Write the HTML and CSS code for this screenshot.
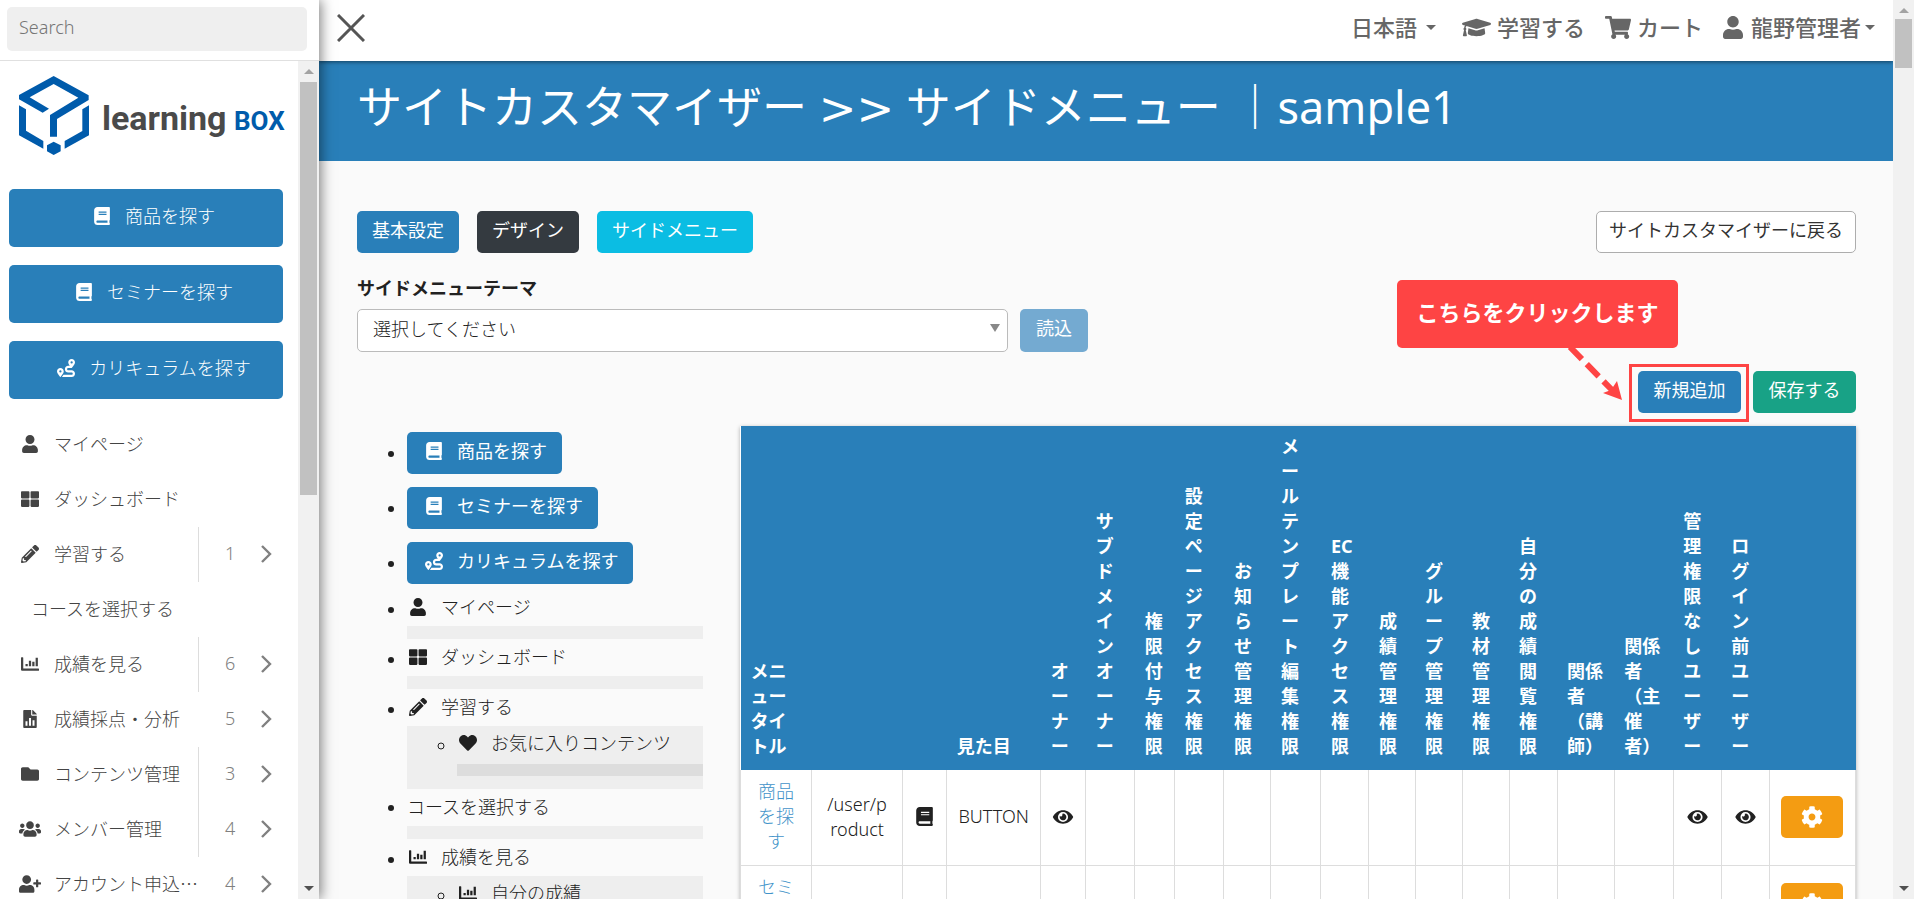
FILE: index.html
```html
<!DOCTYPE html>
<html lang="ja">
<head>
<meta charset="utf-8">
<title>サイトカスタマイザー</title>
<link rel="stylesheet" href="styles.css">
</head>
<body>
<svg class="sprite" aria-hidden="true">
  <symbol id="i-user" viewBox="0 0 448 512"><path d="M224 256c70.7 0 128-57.3 128-128S294.7 0 224 0 96 57.3 96 128s57.3 128 128 128zm89.6 32h-16.7c-22.2 10.2-46.9 16-72.9 16s-50.6-5.8-72.9-16h-16.7C60.2 288 0 348.2 0 422.4V464c0 26.5 21.5 48 48 48h352c26.5 0 48-21.5 48-48v-41.6c0-74.2-60.2-134.4-134.4-134.4z"/></symbol>
  <symbol id="i-th" viewBox="0 0 512 512"><path d="M296 32h192c13.255 0 24 10.745 24 24v160c0 13.255-10.745 24-24 24H296c-13.255 0-24-10.745-24-24V56c0-13.255 10.745-24 24-24zm-80 0H24C10.745 32 0 42.745 0 56v160c0 13.255 10.745 24 24 24h192c13.255 0 24-10.745 24-24V56c0-13.255-10.745-24-24-24zM0 296v160c0 13.255 10.745 24 24 24h192c13.255 0 24-10.745 24-24V296c0-13.255-10.745-24-24-24H24c-13.255 0-24 10.745-24 24zm296 184h192c13.255 0 24-10.745 24-24V296c0-13.255-10.745-24-24-24H296c-13.255 0-24 10.745-24 24v160c0 13.255 10.745 24 24 24z"/></symbol>
  <symbol id="i-pencil" viewBox="0 0 512 512"><path d="M497.9 142.1l-46.1 46.1c-4.7 4.7-12.3 4.7-17 0l-111-111c-4.7-4.7-4.7-12.3 0-17l46.1-46.1c18.7-18.7 49.1-18.7 67.9 0l60.1 60.1c18.8 18.7 18.8 49.1 0 67.9zM284.2 99.8L21.6 362.4.4 483.9c-2.9 16.4 11.4 30.6 27.8 27.8l121.5-21.3 262.6-262.6c4.7-4.7 4.7-12.3 0-17l-111-111c-4.8-4.7-12.4-4.7-17.1 0zM124.1 339.9c-5.5-5.5-5.5-14.3 0-19.8l154-154c5.5-5.5 14.3-5.5 19.8 0s5.5 14.3 0 19.8l-154 154c-5.5 5.5-14.3 5.5-19.8 0zM88 424h48v36.3l-64.5 11.3-31.1-31.1L51.7 376H88v48z"/></symbol>
  <symbol id="i-folder" viewBox="0 0 512 512"><path d="M464 128H272l-64-64H48C21.49 64 0 85.49 0 112v288c0 26.51 21.49 48 48 48h416c26.51 0 48-21.49 48-48V176c0-26.51-21.49-48-48-48z"/></symbol>
  <symbol id="i-book" viewBox="0 0 448 512"><path d="M448 360V24c0-13.3-10.7-24-24-24H96C43 0 0 43 0 96v320c0 53 43 96 96 96h328c13.3 0 24-10.7 24-24v-16c0-7.5-3.5-14.3-8.9-18.7-4.2-15.4-4.2-59.3 0-74.7 5.4-4.3 8.9-11.1 8.9-18.6zM128 134c0-3.3 2.7-6 6-6h212c3.3 0 6 2.7 6 6v20c0 3.3-2.7 6-6 6H134c-3.3 0-6-2.7-6-6v-20zm0 64c0-3.3 2.7-6 6-6h212c3.3 0 6 2.7 6 6v20c0 3.3-2.7 6-6 6H134c-3.3 0-6-2.7-6-6v-20zm253.4 250H96c-17.7 0-32-14.3-32-32 0-17.6 14.4-32 32-32h285.4c-1.9 17.1-1.9 46.9 0 64z"/></symbol>
  <symbol id="i-heart" viewBox="0 0 512 512"><path d="M462.3 62.6C407.5 15.9 326 24.3 275.7 76.2L256 96.5l-19.7-20.3C186.1 24.3 104.5 15.9 49.7 62.6c-62.8 53.6-66.1 149.8-9.9 207.9l193.5 199.8c12.5 12.9 32.8 12.9 45.3 0l193.5-199.8c56.3-58.1 53-154.3-9.8-207.9z"/></symbol>
  <symbol id="i-chart" viewBox="0 0 512 512"><path d="M16 64h32q16 0 16 16v304h432q16 0 16 16v32q0 16-16 16H32q-32 0-32-32V80q0-16 16-16zM128 256h64v64h-64zM224 160h64v160h-64zM320 192h64v128h-64zM416 80h64v240h-64z"/></symbol>
  <symbol id="i-file" viewBox="0 0 384 512"><path fill-rule="evenodd" d="M224 136V0H24C11 0 0 11 0 24v464c0 13 11 24 24 24h336c13 0 24-11 24-24V160H248c-13 0-24-11-24-24zM64 320h56v128H64zM164 224h56v224h-56zM264 288h56v160h-56zM384 122v6H256V0h6c6 0 12 2 17 7l98 98c5 4 7 11 7 17z"/></symbol>
  <symbol id="i-users" viewBox="0 0 640 512"><path d="M96 224c35.3 0 64-28.7 64-64s-28.7-64-64-64-64 28.7-64 64 28.7 64 64 64zm448 0c35.3 0 64-28.7 64-64s-28.7-64-64-64-64 28.7-64 64 28.7 64 64 64zm32 32h-64c-17.6 0-33.5 7.1-45.1 18.6 40.3 22.1 68.9 62 75.1 109.4h66c17.7 0 32-14.3 32-32v-32c0-35.3-28.7-64-64-64zm-256 0c61.9 0 112-50.1 112-112S381.9 32 320 32 208 82.1 208 144s50.1 112 112 112zm76.8 32h-8.3c-20.8 10-43.9 16-68.5 16s-47.6-6-68.5-16h-8.3C179.6 288 128 339.6 128 403.2V432c0 26.5 21.5 48 48 48h288c26.5 0 48-21.5 48-48v-28.8c0-63.6-51.6-115.2-115.2-115.2zm-223.7-13.4C161.5 263.1 145.6 256 128 256H64c-35.3 0-64 28.7-64 64v32c0 17.7 14.3 32 32 32h65.9c6.3-47.4 34.9-87.3 75.2-109.4z"/></symbol>
  <symbol id="i-userplus" viewBox="0 0 640 512"><path d="M624 208h-64v-64c0-8.8-7.2-16-16-16h-32c-8.8 0-16 7.2-16 16v64h-64c-8.8 0-16 7.2-16 16v32c0 8.8 7.2 16 16 16h64v64c0 8.8 7.2 16 16 16h32c8.8 0 16-7.2 16-16v-64h64c8.8 0 16-7.2 16-16v-32c0-8.8-7.2-16-16-16zM224 256c70.7 0 128-57.3 128-128S294.7 0 224 0 96 57.3 96 128s57.3 128 128 128zm89.6 32h-16.7c-22.2 10.2-46.9 16-72.9 16s-50.6-5.8-72.9-16h-16.7C60.2 288 0 348.2 0 422.4V464c0 26.5 21.5 48 48 48h352c26.5 0 48-21.5 48-48v-41.6c0-74.2-60.2-134.4-134.4-134.4z"/></symbol>
  <symbol id="i-route" viewBox="0 0 512 512"><path fill-rule="evenodd" d="M416 320h-96c-17.600 0-32-14.400-32-32s14.400-32 32-32h96s96-107 96-160S469 0 416 0s-96 43-96 96c0 25.500 22.200 63.400 45.300 96H320c-52.900 0-96 43.100-96 96s43.100 96 96 96h96c17.600 0 32 14.400 32 32s-14.400 32-32 32H185.500c-16 24.800-33.800 47.700-47.300 64H416c52.900 0 96-43.100 96-96s-43.100-96-96-96zm0-256a32 32 0 1 1 0 64 32 32 0 0 1 0-64zM96 256c-53 0-96 43-96 96s96 160 96 160 96-107 96-160-43-96-96-96zm0 64a32 32 0 1 1 0 64 32 32 0 0 1 0-64z"/></symbol>
  <symbol id="i-cap" viewBox="0 0 640 512"><path d="M622.34 153.2L343.4 67.5c-15.2-4.67-31.6-4.67-46.79 0L17.66 153.2c-23.54 7.23-23.54 38.36 0 45.59l48.63 14.94c-10.67 13.19-17.23 29.28-17.88 46.9C38.78 266.15 32 276.11 32 288c0 10.780 5.68 19.850 13.860 25.650L20.330 428.530C18.110 438.520 25.710 448 35.940 448h56.110c10.240 0 17.840-9.480 15.620-19.470L82.140 313.650C90.320 307.850 96 298.780 96 288c0-11.570-6.470-21.250-15.660-26.870.76-15.020 8.440-28.300 20.690-36.720L296.600 284.500c9.060 2.780 26.440 6.250 46.790 0l278.950-85.700c23.550-7.240 23.550-38.360 0-45.600zM352.790 315.090c-28.530 8.760-52.840 3.920-65.590 0l-145.020-44.550L128 384c0 35.350 85.960 64 192 64s192-28.650 192-64l-14.180-113.470-145.030 44.560z"/></symbol>
  <symbol id="i-cart" viewBox="0 0 576 512"><path d="M528.12 301.319l47.273-208C578.806 78.301 567.391 64 551.99 64H159.208l-9.166-44.81C147.758 8.021 137.93 0 126.529 0H24C10.745 0 0 10.745 0 24v16c0 13.255 10.745 24 24 24h69.883l70.248 343.435C147.325 417.1 136 435.222 136 456c0 30.928 25.072 56 56 56s56-25.072 56-56c0-15.674-6.447-29.835-16.824-40h209.647C430.447 426.165 424 440.326 424 456c0 30.928 25.072 56 56 56s56-25.072 56-56c0-22.172-12.888-41.332-31.579-50.405l5.517-24.276c3.413-15.018-8.002-29.319-23.403-29.319H218.117l-6.545-32h293.145c11.206 0 20.92-7.754 23.403-18.681z"/></symbol>
  <symbol id="i-eye" viewBox="0 0 576 512"><path d="M572.52 241.4C518.29 135.59 410.93 64 288 64S57.68 135.64 3.48 241.41a32.35 32.35 0 0 0 0 29.19C57.71 376.41 165.07 448 288 448s230.32-71.64 284.52-177.41a32.35 32.35 0 0 0 0-29.19zM288 400a144 144 0 1 1 144-144 143.93 143.93 0 0 1-144 144zm0-240a95.31 95.31 0 0 0-25.31 3.79 47.85 47.85 0 0 1-66.9 66.9A95.78 95.78 0 1 0 288 160z"/></symbol>
  <symbol id="i-cog" viewBox="0 0 512 512"><path d="M487.4 315.7l-42.6-24.6c4.3-23.2 4.3-47 0-70.2l42.6-24.6c4.9-2.8 7.1-8.6 5.5-14-11.1-35.6-30-67.8-54.7-94.6-3.800-4.100-10-5.100-14.800-2.300L380.800 110c-17.900-15.400-38.500-27.300-60.800-35.100V25.800c0-5.600-3.900-10.500-9.400-11.700-36.700-8.200-74.300-7.800-109.200 0-5.500 1.200-9.400 6.100-9.400 11.700V75c-22.200 7.900-42.800 19.800-60.800 35.100L88.700 85.500c-4.900-2.800-11-1.900-14.800 2.300-24.700 26.700-43.600 58.900-54.700 94.600-1.700 5.400.6 11.200 5.500 14L67.300 221c-4.300 23.200-4.300 47 0 70.200l-42.600 24.600c-4.900 2.800-7.100 8.600-5.500 14 11.100 35.600 30 67.800 54.700 94.600 3.800 4.100 10 5.100 14.800 2.300l42.600-24.600c17.900 15.400 38.500 27.300 60.800 35.100v49.200c0 5.600 3.900 10.500 9.400 11.700 36.700 8.200 74.300 7.800 109.200 0 5.500-1.200 9.400-6.100 9.400-11.700v-49.200c22.200-7.900 42.800-19.800 60.800-35.100l42.600 24.600c4.900 2.800 11 1.900 14.800-2.300 24.700-26.700 43.600-58.900 54.700-94.600 1.500-5.500-.7-11.300-5.600-14.100zM256 336c-44.100 0-80-35.900-80-80s35.900-80 80-80 80 35.900 80 80-35.900 80-80 80z"/></symbol>
  <symbol id="i-chevron" viewBox="0 0 12 20"><path d="M2 2l8 8-8 8" fill="none" stroke="currentColor" stroke-width="2.400"/></symbol>
  <symbol id="i-up" viewBox="0 0 10 6"><path d="M0 6l5-5 5 5z"/></symbol>
  <symbol id="i-down" viewBox="0 0 10 6"><path d="M0 0l5 5 5-5z"/></symbol>
</svg>
<div class="app">
  <aside class="sidebar">
    <div class="search"><input type="search" placeholder="Search" aria-label="Search"></div>
    <div class="side-body">
      <div class="side-scroll">
        <a class="logo" href="#" aria-label="learningBOX">
          <svg viewBox="0 0 267 79" width="267" height="79">
            <g transform="scale(.3333) translate(-57 -48)" fill="#005bab">
              <path d="M161 48L266 106V120L171 177V230H150V165L235 113 161 72 89 112 147 146 128 158 57 118V105z"/>
              <path d="M57 136L78 148V212L130 243V266L57 226zM267 136L247 148V213L194 243V266L267 226zM161 245L182 256V274L161 285 141 274V256z"/>
            </g>
            <text class="logo-a" x="83" y="54">learning</text>
            <text class="logo-b" x="215" y="54">BOX</text>
          </svg>
        </a>
        <nav class="side-nav">
          <a class="btn big" href="#"><svg class="ic"><use href="#i-book"/></svg>商品を探す</a>
          <a class="btn big" href="#"><svg class="ic"><use href="#i-book"/></svg>セミナーを探す</a>
          <a class="btn big" href="#"><svg class="ic"><use href="#i-route"/></svg>カリキュラムを探す</a>
          <ul class="menu">
            <li><a href="#"><svg class="ic"><use href="#i-user"/></svg><span>マイページ</span></a></li>
            <li><a href="#"><svg class="ic"><use href="#i-th"/></svg><span>ダッシュボード</span></a></li>
            <li><a href="#"><svg class="ic"><use href="#i-pencil"/></svg><span>学習する</span></a><button class="more line">1<svg><use href="#i-chevron"/></svg></button></li>
            <li><a class="plain" href="#"><span>コースを選択する</span></a></li>
            <li><a href="#"><svg class="ic"><use href="#i-chart"/></svg><span>成績を見る</span></a><button class="more line">6<svg><use href="#i-chevron"/></svg></button></li>
            <li><a href="#"><svg class="ic"><use href="#i-file"/></svg><span>成績採点・分析</span></a><button class="more">5<svg><use href="#i-chevron"/></svg></button></li>
            <li><a href="#"><svg class="ic"><use href="#i-folder"/></svg><span>コンテンツ管理</span></a><button class="more line">3<svg><use href="#i-chevron"/></svg></button></li>
            <li><a href="#"><svg class="ic wide"><use href="#i-users"/></svg><span>メンバー管理</span></a><button class="more line">4<svg><use href="#i-chevron"/></svg></button></li>
            <li><a href="#"><svg class="ic wide"><use href="#i-userplus"/></svg><span>アカウント申込…</span></a><button class="more">4<svg><use href="#i-chevron"/></svg></button></li>
          </ul>
        </nav>
      </div>
      <div class="bar" aria-hidden="true"><svg class="off"><use href="#i-up"/></svg><i class="thumb long"></i><svg class="end"><use href="#i-down"/></svg></div>
    </div>
  </aside>

  <div class="page">
    <header class="top">
      <button class="close" aria-label="閉じる"><svg viewBox="0 0 28 28"><path d="M1 1l26 26M27 1L1 27"/></svg></button>
      <nav class="top-nav">
        <a class="lang" href="#">日本語<i class="caret"></i></a>
        <a class="learn" href="#"><svg class="w28"><use href="#i-cap"/></svg>学習する</a>
        <a class="cart" href="#"><svg class="w26"><use href="#i-cart"/></svg>カート</a>
        <a class="me" href="#"><svg class="w20"><use href="#i-user"/></svg>龍野管理者<i class="caret"></i></a>
      </nav>
    </header>
    <div class="title"><h1>サイトカスタマイザー <span class="sep">&gt;&gt;</span> サイドメニュー ｜sample1</h1></div>
    <main>
      <div class="tabs">
        <a class="btn" href="#">基本設定</a>
        <a class="btn dark" href="#">デザイン</a>
        <a class="btn cyan" href="#">サイドメニュー</a>
        <a class="btn white" href="#">サイトカスタマイザーに戻る</a>
      </div>
      <label class="lbl" for="theme">サイドメニューテーマ</label>
      <div class="pick">
        <div class="selwrap"><select id="theme"><option>選択してください</option></select></div>
        <button class="btn" disabled>読込</button>
      </div>
      <div class="actions">
        <div class="target">
          <button class="btn">新規追加</button>
          <div class="note">こちらをクリックします</div>
          <svg class="arrow" viewBox="0 0 60 56"><path d="M5 2L47 45" fill="none" stroke="#fe4444" stroke-width="6" stroke-dasharray="17 7"/><path d="M57 55L38 48 46 45 52 36z" fill="#fe4444"/></svg>
        </div>
        <button class="btn green">保存する</button>
      </div>
      <div class="cols">
        <ul class="preview">
          <li class="b"><a class="btn" href="#"><svg class="ic"><use href="#i-book"/></svg>商品を探す</a></li>
          <li class="b"><a class="btn" href="#"><svg class="ic"><use href="#i-book"/></svg>セミナーを探す</a></li>
          <li class="b"><a class="btn" href="#"><svg class="ic"><use href="#i-route"/></svg>カリキュラムを探す</a></li>
          <li><div class="row"><svg class="ic"><use href="#i-user"/></svg>マイページ</div><ul></ul></li>
          <li><div class="row"><svg class="ic"><use href="#i-th"/></svg>ダッシュボード</div><ul></ul></li>
          <li><div class="row"><svg class="ic"><use href="#i-pencil"/></svg>学習する</div>
            <ul><li><div class="row"><svg class="ic"><use href="#i-heart"/></svg>お気に入りコンテンツ</div><ul></ul></li></ul></li>
          <li><div class="row">コースを選択する</div><ul></ul></li>
          <li><div class="row"><svg class="ic"><use href="#i-chart"/></svg>成績を見る</div>
            <ul><li><div class="row"><svg class="ic"><use href="#i-chart"/></svg>自分の成績</div><ul></ul></li></ul></li>
        </ul>
        <div class="tablebox">
          <table>
            <colgroup><col class="c71"><col class="c91"><col class="c44"><col class="c94"><col class="c45"><col class="c49"><col class="c40"><col class="c49"><col class="c47"><col class="c50"><col class="c48"><col class="c46"><col class="c47"><col class="c47"><col class="c48"><col class="c57"><col class="c59"><col class="c48"><col class="c48"><col class="c86"></colgroup>
            <thead><tr><th>メニュータイトル</th><th></th><th></th><th>見た目</th><th>オーナー</th><th>サブドメインオーナー</th><th>権限付与権限</th><th>設定ページアクセス権限</th><th>お知らせ管理権限</th><th>メールテンプレート編集権限</th><th>EC機能アクセス権限</th><th>成績管理権限</th><th>グループ管理権限</th><th>教材管理権限</th><th>自分の成績閲覧権限</th><th>関係者（講師）</th><th>関係者（主催者）</th><th>管理権限なしユーザー</th><th>ログイン前ユーザー</th><th></th></tr></thead>
            <tbody>
              <tr><td><a href="#">商品を探す</a></td><td class="path">/user/product</td><td><svg class="ic sm"><use href="#i-book"/></svg></td><td>BUTTON</td><td><svg class="ic"><use href="#i-eye"/></svg></td><td></td><td></td><td></td><td></td><td></td><td></td><td></td><td></td><td></td><td></td><td></td><td></td><td><svg class="ic"><use href="#i-eye"/></svg></td><td><svg class="ic"><use href="#i-eye"/></svg></td><td><button class="btn gear" aria-label="設定"><svg><use href="#i-cog"/></svg></button></td></tr>
              <tr><td><a href="#">セミナーを探す</a></td><td class="path">/user/seminar</td><td><svg class="ic sm"><use href="#i-book"/></svg></td><td>BUTTON</td><td><svg class="ic"><use href="#i-eye"/></svg></td><td></td><td></td><td></td><td></td><td></td><td></td><td></td><td></td><td></td><td></td><td></td><td></td><td><svg class="ic"><use href="#i-eye"/></svg></td><td><svg class="ic"><use href="#i-eye"/></svg></td><td><button class="btn gear" aria-label="設定"><svg><use href="#i-cog"/></svg></button><button class="btn gear" aria-label="設定"><svg><use href="#i-cog"/></svg></button></td></tr>
            </tbody>
          </table>
        </div>
      </div>
    </main>
  </div>
  <div class="bar" aria-hidden="true"><svg class="off"><use href="#i-up"/></svg><i class="thumb"></i><svg class="end"><use href="#i-down"/></svg></div>
</div>
</body>
</html>
```
FILE: styles.css
```css
* { box-sizing: border-box; }
body {
  margin: 0;
  font: 300 18px/25px "Noto Sans", "Noto Sans CJK JP", sans-serif;
  color: #212121;
  background: #fafafa;
  overflow: hidden;
}
a { color: inherit; text-decoration: none; }
button, input, select { font: inherit; }
button { border: 0; background: none; color: inherit; }
svg { fill: currentColor; }
ul { margin: 0; padding: 0; list-style: none; }
.sprite { position: absolute; width: 0; height: 0; }
.app { display: flex; height: 100vh; }
.ic { width: 18px; height: 18px; flex: none; }
.ic.wide { width: 22px; margin: 0 -2px; }

/* scroll bars */
.bar { flex: none; width: 21px; padding: 7px 2px; background: #f1f1f1; display: flex; flex-direction: column; align-items: center; }
.bar svg { width: 10px; height: 6px; color: #505050; }
.bar .off { color: #a3a3a3; }
.bar .end { margin-top: auto; }
.thumb { width: 17px; height: 49px; margin-top: 6px; background: #c1c1c1; }
.thumb.long { height: 413px; margin-top: 8px; }

/* side bar */
.sidebar { position: relative; z-index: 2; flex: none; width: 319px; display: flex; flex-direction: column; background: #fff; box-shadow: 2px 0 12px rgba(0, 0, 0, .5); }
.search { padding: 7px 12px 9px 7px; border-bottom: 1px solid #e0e0e0; }
.search input { width: 100%; height: 44px; padding: 0 12px 4px; border: 0; border-radius: 5px; background: #efefef; color: #757575; display: block; }
.search input::placeholder { color: #757575; }
.side-body { flex: 1; min-height: 0; display: flex; }
.side-scroll { flex: 1; overflow: hidden; }
.logo { display: block; padding: 15px 0 0 19px; height: 128px; }
.logo svg { display: block; }
.logo text { font-family: Roboto, sans-serif; font-weight: 700; }
.logo-a { font-size: 34px; fill: #4a4a4a; }
.logo-b { font-size: 26px; fill: #005bab; }
.btn { display: inline-flex; align-items: center; justify-content: center; height: 42px; padding: 0 15px 4px; border-radius: 5px; background: #297fb9; color: #fff; font-weight: 400; white-space: nowrap; }
.btn .ic { margin-right: 14px; }
.big { display: flex; height: 58px; margin: 0 15px 18px 9px; padding-left: 31px; font-weight: 300; }
.menu li { display: flex; height: 55px; color: #444; }
.menu a { flex: 1; display: flex; align-items: center; gap: 15px; padding: 0 0 2px 21px; white-space: nowrap; }
.menu a.plain { padding-left: 31px; }
.menu span { font-family: "Noto Sans CJK JP", sans-serif; }
.more { width: 100px; padding: 0 0 2px 26px; display: flex; align-items: center; gap: 25px; color: #808080; border-left: 1px solid transparent; }
.more.line { border-color: #ddd; }
.more svg { width: 12px; height: 20px; }

/* header */
.page { flex: 1; min-width: 0; overflow: hidden; }
.top { position: relative; z-index: 1; height: 61px; display: flex; justify-content: space-between; align-items: center; padding: 0 18px 6px 18px; background: #fff; box-shadow: 0 1px 4px rgba(0, 0, 0, .5); }
.close { padding: 0; width: 28px; height: 28px; }
.close svg { display: block; width: 28px; height: 28px; stroke: #555; stroke-width: 3; }
.top-nav { display: flex; font-size: 22px; font-weight: 500; color: #666; }
.top-nav a { display: flex; align-items: center; }
.top-nav svg { height: 25px; margin-right: 6px; }
.w28 { width: 29px; }
.w26 { width: 26px; }
.w20 { width: 20px; }
.learn { margin-left: 26px; }
.cart, .me { margin-left: 20px; }
.top-nav .w20 { margin-right: 8px; }
.caret { margin-left: 4px; border: 5px solid transparent; border-top-color: currentColor; border-bottom: 0; }
.lang .caret { margin-left: 9px; }
.title { height: 100px; padding: 16px 38px; background: #297fb9; color: #fff; }
h1 { margin: 0; font-size: 45px; line-height: 60px; font-weight: 400; white-space: nowrap; }
.sep { font-family: "DejaVu Sans", sans-serif; }

main { padding: 50px 37px 0 38px; }
.tabs { display: flex; gap: 18px; }
.dark { background: #343a40; }
.cyan { background: #0bbde3; }
.white { margin-left: auto; background: #fff; border: 1px solid #adadad; color: #333; padding: 0 12px 4px; }
.lbl { display: block; margin: 23px 0 8px; font-weight: 700; }
.pick { display: flex; gap: 12px; }
.selwrap { position: relative; width: 651px; }
.selwrap::after { content: ""; position: absolute; right: 8px; top: 15px; border: 5px solid transparent; border-top: 8px solid #888; border-bottom: 0; }
select { appearance: none; width: 100%; height: 43px; padding: 0 15px 2px; border: 1px solid #bbb; border-radius: 5px; background: #fff; color: #222; }
.pick .btn { width: 68px; height: 43px; background: #74aad1; }
.actions { display: flex; justify-content: flex-end; gap: 4px; margin-top: 12px; }
.actions .btn { width: 103px; }
.actions .green { margin-top: 7px; background: #18a286; }
.target { position: relative; padding: 4px 5px 4px 6px; border: 3px solid #fe4444; height: 58px; }
.note { position: absolute; right: 68px; bottom: 71px; width: 281px; height: 68px; border-radius: 5px; background: #fe4444; color: #fff; font-size: 22px; font-weight: 700; line-height: 64px; text-align: center; white-space: nowrap; }
.arrow { position: absolute; right: 121px; bottom: 18px; width: 60px; height: 56px; }

.cols { display: flex; gap: 38px; margin-top: 4px; }
.preview { width: 296px; flex: none; margin: 6px 0 0 50px; list-style: disc; }
.preview .b { height: 55px; }
.preview .b .btn { padding: 0 15px 4px 18px; }
.row { display: flex; align-items: center; height: 31px; padding-bottom: 3px; }
.preview .row .ic { margin: 0 14px 0 2px; }
.preview > li > ul { min-height: 13px; margin: 2px 0 4px; padding: 0 0 13px 50px; background: #eee; list-style: circle; }
.preview > li > ul > li { padding-top: 3px; }
.preview ul ul { height: 12px; margin-top: 4px; background: #ddd; }
.preview > li:nth-child(4) { margin-top: -4px; }

.tablebox { flex: 1; min-width: 0; margin-left: -1px; box-shadow: 0 1px 4px rgba(0, 0, 0, .3); background: #fff; }
table { width: 100%; table-layout: fixed; border-collapse: collapse; }
th { padding: 8px 9px 11px 10px; vertical-align: bottom; text-align: left; font-weight: 700; line-break: loose; overflow-wrap: anywhere; background: #297fb9; color: #fff; }
td { padding: 9px 10px 11px; border: 1px solid #ddd; border-top: 0; text-align: center; vertical-align: middle; word-break: break-all; }
td.path { padding: 9px 12px 11px; }
td a { color: #4293c9; }
td .ic { display: block; margin: 0 -1px; width: calc(100% + 2px); }
td .ic.sm { height: 19px; }
.gear { width: 62px; padding: 0; background: #f49c12; margin: 0 1px; vertical-align: middle; }
.gear svg { width: 22px; height: 22px; }
.c40 { width: 40px; } .c44 { width: 44px; } .c45 { width: 45px; } .c46 { width: 46px; }
.c47 { width: 47px; } .c48 { width: 48px; } .c49 { width: 49px; } .c50 { width: 50px; }
.c57 { width: 57px; } .c59 { width: 59px; } .c71 { width: 71px; } .c86 { width: 86px; }
.c91 { width: 91px; } .c94 { width: 94px; }
```
